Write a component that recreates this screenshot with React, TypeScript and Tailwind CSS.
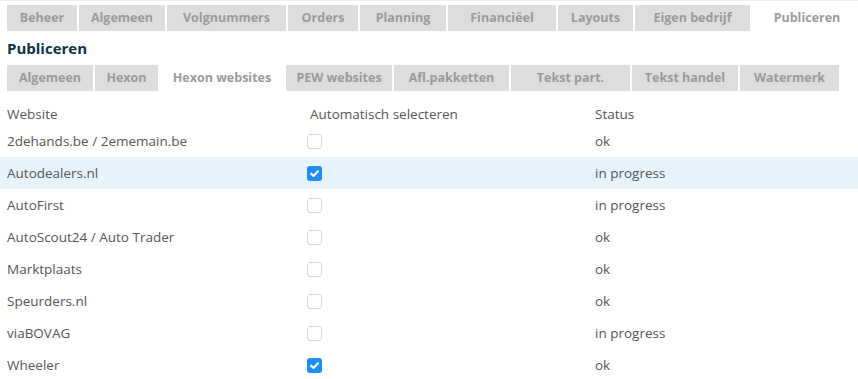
import React from "react";

const topTabs = [
  {label: "Beheer", w: "w-[70px]"},
  {label: "Algemeen", w: "w-[86px]"},
  {label: "Volgnummers", w: "w-[119px]"},
  {label: "Orders", w: "w-[70px]"},
  {label: "Planning", w: "w-[86px]"},
  {label: "Financiëel", w: "w-[108px]"},
  {label: "Layouts", w: "w-[75px]"},
  {label: "Eigen bedrijf", w: "w-[115px]"},
  {label: "Publiceren", w: "w-[110px]", active: true},
];

const subTabs = [
  {label: "Algemeen", w: "w-[86px]"},
  {label: "Hexon", w: "w-[63px]"},
  {label: "Hexon websites", w: "w-[124px]", active: true},
  {label: "PEW websites", w: "w-[106px]"},
  {label: "Afl.pakketten", w: "w-[115px]"},
  {label: "Tekst part.", w: "w-[119px]"},
  {label: "Tekst handel", w: "w-[106px]"},
  {label: "Watermerk", w: "w-[99px]"},
];

const sites = [
  {name: "2dehands.be / 2ememain.be", checked: false, status: "ok"},
  {name: "Autodealers.nl", checked: true, status: "in progress", hover: true},
  {name: "AutoFirst", checked: false, status: "in progress"},
  {name: "AutoScout24 / Auto Trader", checked: false, status: "ok"},
  {name: "Marktplaats", checked: false, status: "ok"},
  {name: "Speurders.nl", checked: false, status: "ok"},
  {name: "viaBOVAG", checked: false, status: "in progress"},
  {name: "Wheeler", checked: true, status: "ok"},
];

type Tab = {label: string; w: string; active?: boolean};

const TabBar = ({tabs}: {tabs: Tab[]}) => (
  <div className="flex gap-[2px] px-[7px] whitespace-nowrap">
    {tabs.map((t) => (
      <div
        key={t.label}
        className={`${t.w} shrink-0 h-[26px] flex items-center justify-center text-[12.5px] font-bold text-[#9a9a9a] ${
          t.active ? "bg-white" : "bg-[#dddddd]"
        }`}
      >
        {t.label}
      </div>
    ))}
  </div>
);

const Checkbox = ({checked}: {checked: boolean}) =>
  checked ? (
    <div className="w-[15px] h-[15px] rounded-[3px] bg-[#1e90f5] flex items-center justify-center">
      <svg width="11" height="11" viewBox="0 0 12 12">
        <path d="M2.3 6.2 L4.9 8.7 L9.8 3.6" fill="none" stroke="white" strokeWidth="2.2" strokeLinecap="round" strokeLinejoin="round"/>
      </svg>
    </div>
  ) : (
    <div className="w-[15px] h-[15px] rounded-[3px] bg-white border border-[#d9d9d9]"/>
  );

export default function App() {
  return (
    <div className="w-[858px] h-[379px] overflow-hidden bg-white border-t border-[#eeeeee] text-[#555555] font-['Open_Sans',sans-serif]">
      <div className="pt-[4px]">
        <TabBar tabs={topTabs}/>
      </div>
      <h1 className="px-[7px] h-[34px] flex items-center text-[15px] font-bold text-[#0c3446]">Publiceren</h1>
      <TabBar tabs={subTabs}/>
      <div className="mt-[8px] text-[13.5px]">
        <div className="grid grid-cols-[300px_288px_1fr] pl-[7px] h-[26px] pt-[5px] items-center">
          <div>Website</div>
          <div className="pl-[3px]">Automatisch selecteren</div>
          <div>Status</div>
        </div>
        {sites.map((s) => (
          <div
            key={s.name}
            className={`grid grid-cols-[300px_288px_1fr] pl-[7px] h-[32px] items-center ${s.hover ? "bg-[#e6f2fc]" : ""}`}
          >
            <div>{s.name}</div>
            <div><Checkbox checked={s.checked}/></div>
            <div>{s.status}</div>
          </div>
        ))}
      </div>
    </div>
  );
}
